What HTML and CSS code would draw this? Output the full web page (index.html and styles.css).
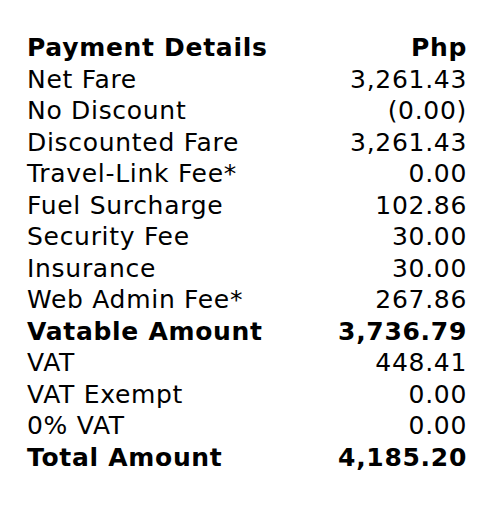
FILE: index.html
```html
<!DOCTYPE html>
<html>
<head>
<meta charset="utf-8">
<link rel="stylesheet" href="styles.css">
</head>
<body>
<table class="pay">
<tr class="b"><td>Payment Details</td><td class="n">Php</td></tr>
<tr><td>Net Fare</td><td class="n">3,261.43</td></tr>
<tr><td>No Discount</td><td class="n">(0.00)</td></tr>
<tr><td>Discounted Fare</td><td class="n">3,261.43</td></tr>
<tr><td>Travel-Link Fee*</td><td class="n">0.00</td></tr>
<tr><td>Fuel Surcharge</td><td class="n">102.86</td></tr>
<tr><td>Security Fee</td><td class="n">30.00</td></tr>
<tr><td>Insurance</td><td class="n">30.00</td></tr>
<tr><td>Web Admin Fee*</td><td class="n">267.86</td></tr>
<tr class="b"><td>Vatable Amount</td><td class="n">3,736.79</td></tr>
<tr><td>VAT</td><td class="n">448.41</td></tr>
<tr><td>VAT Exempt</td><td class="n">0.00</td></tr>
<tr><td>0% VAT</td><td class="n">0.00</td></tr>
<tr class="b"><td>Total Amount</td><td class="n">4,185.20</td></tr>
</table>
</body>
</html>
```
FILE: styles.css
```css
html, body { margin: 0; padding: 0; background: #fff; }
body { padding: 32px 24px 0 27px; }
.pay {
  width: 440px;
  border-collapse: collapse;
  font-family: "DejaVu Sans", Verdana, sans-serif;
  font-size: 25px;
  letter-spacing: 0.7px;
  color: #000;
}
.pay td { padding: 0; line-height: 31.5px; white-space: nowrap; }
.pay .n { text-align: right; }
.pay .b td { font-weight: bold; }
```
